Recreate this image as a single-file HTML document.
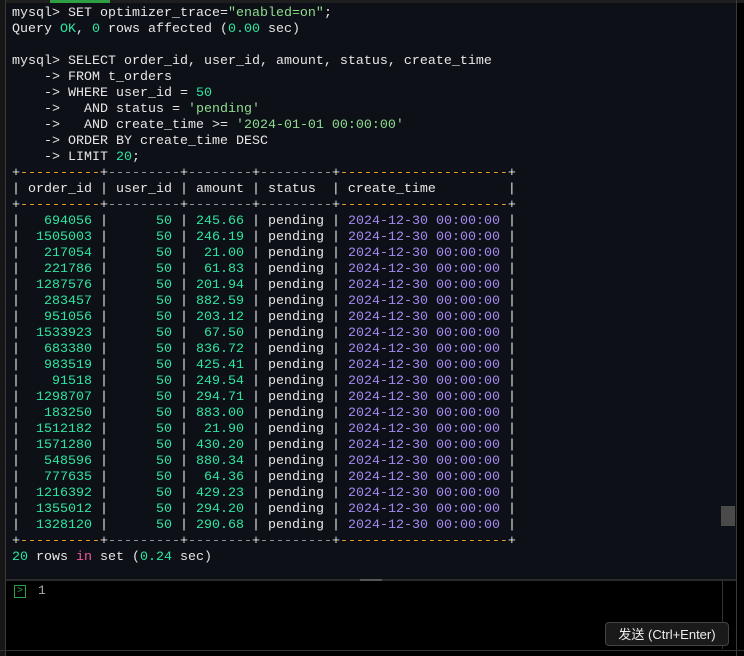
<!DOCTYPE html>
<html><head><meta charset="utf-8">
<style>
html,body{margin:0;padding:0;width:744px;height:656px;overflow:hidden;background:#000;}
#wrap{position:relative;width:744px;height:656px;background:#000;}
#top{position:absolute;left:0;top:0;width:744px;height:3px;background:#1e1e1e;}
#tab{position:absolute;left:50px;top:0;width:60px;height:3px;background:#2ea043;}
#lb{position:absolute;left:0;top:0;width:5px;height:656px;background:#161616;}
#lb2{position:absolute;left:5px;top:0;width:1px;height:656px;background:#3a3a3a;}
#term{position:absolute;left:6px;top:3px;width:730px;height:576px;background:#0d1017;}
#rb{position:absolute;left:736px;top:0;width:1px;height:656px;background:#3a3a3a;}
#thumb{position:absolute;left:721px;top:506px;width:14px;height:20px;background:#4a4a4a;}
#sep{position:absolute;left:6px;top:579px;width:730px;height:2px;background:#2a2a2a;}
#sep2{position:absolute;left:360px;top:579px;width:22px;height:2px;background:#555;}
pre{position:absolute;left:12px;top:6px;margin:0;font-family:"Liberation Mono",monospace;font-size:13.33px;line-height:16px;color:#e6e6e6;}
.g{color:#2ee6a0}.s{color:#8fdc8f}.p{color:#a58af2}.o{color:#e8a030}.k{color:#f05a9a}.d{color:#9aa0a6}
#inp{position:absolute;left:6px;top:581px;width:716px;height:68px;background:#000;}
#ib{position:absolute;left:722px;top:581px;width:1px;height:68px;background:#333;}
#chev{position:absolute;left:14px;top:585px;width:10px;height:11px;border:1px solid #2ea043;color:#2ea043;font:10px/11px "Liberation Mono",monospace;text-align:center;}
#one{position:absolute;left:38px;top:583px;color:#aaa;font:13px/16px "Liberation Mono",monospace;}
#btn{position:absolute;left:605px;top:622px;width:124px;height:24px;background:#1a1a1a;border:1px solid #444;border-radius:4px;color:#eee;font:13px/24px "Liberation Sans","Noto Sans CJK SC",sans-serif;text-align:center;box-sizing:border-box;}
#bot{position:absolute;left:0;top:650px;width:744px;height:1px;background:#333;}
</style></head><body><div id="wrap">
<div id="term"></div>
<div id="top"></div><div id="tab"></div>
<div id="lb"></div><div id="lb2"></div><div id="rb"></div>
<div id="thumb"></div>
<pre>mysql&gt; SET optimizer_trace=<span class="s">"enabled=on"</span>;
Query <span class="g">OK</span>, <span class="g">0</span> rows affected (<span class="g">0.00</span> sec)

mysql&gt; SELECT order_id, user_id, amount, status, create_time
    -&gt; FROM t_orders
    -&gt; WHERE user_id = <span class="g">50</span>
    -&gt;   AND status = <span class="s">'pending'</span>
    -&gt;   AND create_time &gt;= <span class="s">'2024-01-01 00:00:00'</span>
    -&gt; ORDER BY create_time DESC
    -&gt; LIMIT <span class="g">20</span>;
+<span class="o">----------</span>+<span class="d">---------</span>+<span class="d">--------</span>+<span class="d">---------</span>+<span class="o">---------------------</span>+
| order_id | user_id | amount | status  | create_time         |
+<span class="o">----------</span>+<span class="d">---------</span>+<span class="d">--------</span>+<span class="d">---------</span>+<span class="o">---------------------</span>+
|   <span class="g">694056</span> |      <span class="g">50</span> | <span class="g">245.66</span> | pending | <span class="p">2024-12-30 00:00:00</span> |
|  <span class="g">1505003</span> |      <span class="g">50</span> | <span class="g">246.19</span> | pending | <span class="p">2024-12-30 00:00:00</span> |
|   <span class="g">217054</span> |      <span class="g">50</span> |  <span class="g">21.00</span> | pending | <span class="p">2024-12-30 00:00:00</span> |
|   <span class="g">221786</span> |      <span class="g">50</span> |  <span class="g">61.83</span> | pending | <span class="p">2024-12-30 00:00:00</span> |
|  <span class="g">1287576</span> |      <span class="g">50</span> | <span class="g">201.94</span> | pending | <span class="p">2024-12-30 00:00:00</span> |
|   <span class="g">283457</span> |      <span class="g">50</span> | <span class="g">882.59</span> | pending | <span class="p">2024-12-30 00:00:00</span> |
|   <span class="g">951056</span> |      <span class="g">50</span> | <span class="g">203.12</span> | pending | <span class="p">2024-12-30 00:00:00</span> |
|  <span class="g">1533923</span> |      <span class="g">50</span> |  <span class="g">67.50</span> | pending | <span class="p">2024-12-30 00:00:00</span> |
|   <span class="g">683380</span> |      <span class="g">50</span> | <span class="g">836.72</span> | pending | <span class="p">2024-12-30 00:00:00</span> |
|   <span class="g">983519</span> |      <span class="g">50</span> | <span class="g">425.41</span> | pending | <span class="p">2024-12-30 00:00:00</span> |
|    <span class="g">91518</span> |      <span class="g">50</span> | <span class="g">249.54</span> | pending | <span class="p">2024-12-30 00:00:00</span> |
|  <span class="g">1298707</span> |      <span class="g">50</span> | <span class="g">294.71</span> | pending | <span class="p">2024-12-30 00:00:00</span> |
|   <span class="g">183250</span> |      <span class="g">50</span> | <span class="g">883.00</span> | pending | <span class="p">2024-12-30 00:00:00</span> |
|  <span class="g">1512182</span> |      <span class="g">50</span> |  <span class="g">21.90</span> | pending | <span class="p">2024-12-30 00:00:00</span> |
|  <span class="g">1571280</span> |      <span class="g">50</span> | <span class="g">430.20</span> | pending | <span class="p">2024-12-30 00:00:00</span> |
|   <span class="g">548596</span> |      <span class="g">50</span> | <span class="g">880.34</span> | pending | <span class="p">2024-12-30 00:00:00</span> |
|   <span class="g">777635</span> |      <span class="g">50</span> |  <span class="g">64.36</span> | pending | <span class="p">2024-12-30 00:00:00</span> |
|  <span class="g">1216392</span> |      <span class="g">50</span> | <span class="g">429.23</span> | pending | <span class="p">2024-12-30 00:00:00</span> |
|  <span class="g">1355012</span> |      <span class="g">50</span> | <span class="g">294.20</span> | pending | <span class="p">2024-12-30 00:00:00</span> |
|  <span class="g">1328120</span> |      <span class="g">50</span> | <span class="g">290.68</span> | pending | <span class="p">2024-12-30 00:00:00</span> |
+<span class="o">----------</span>+<span class="d">---------</span>+<span class="d">--------</span>+<span class="d">---------</span>+<span class="o">---------------------</span>+
<span class="g">20</span> rows <span class="k">in</span> set (<span class="g">0.24</span> sec)</pre>
<div id="sep"></div><div id="sep2"></div>
<div id="inp"></div><div id="ib"></div>
<div id="chev">&gt;</div>
<div id="one">1</div>
<div id="btn">发送 (Ctrl+Enter)</div>
<div id="bot"></div>
</div></body></html>
